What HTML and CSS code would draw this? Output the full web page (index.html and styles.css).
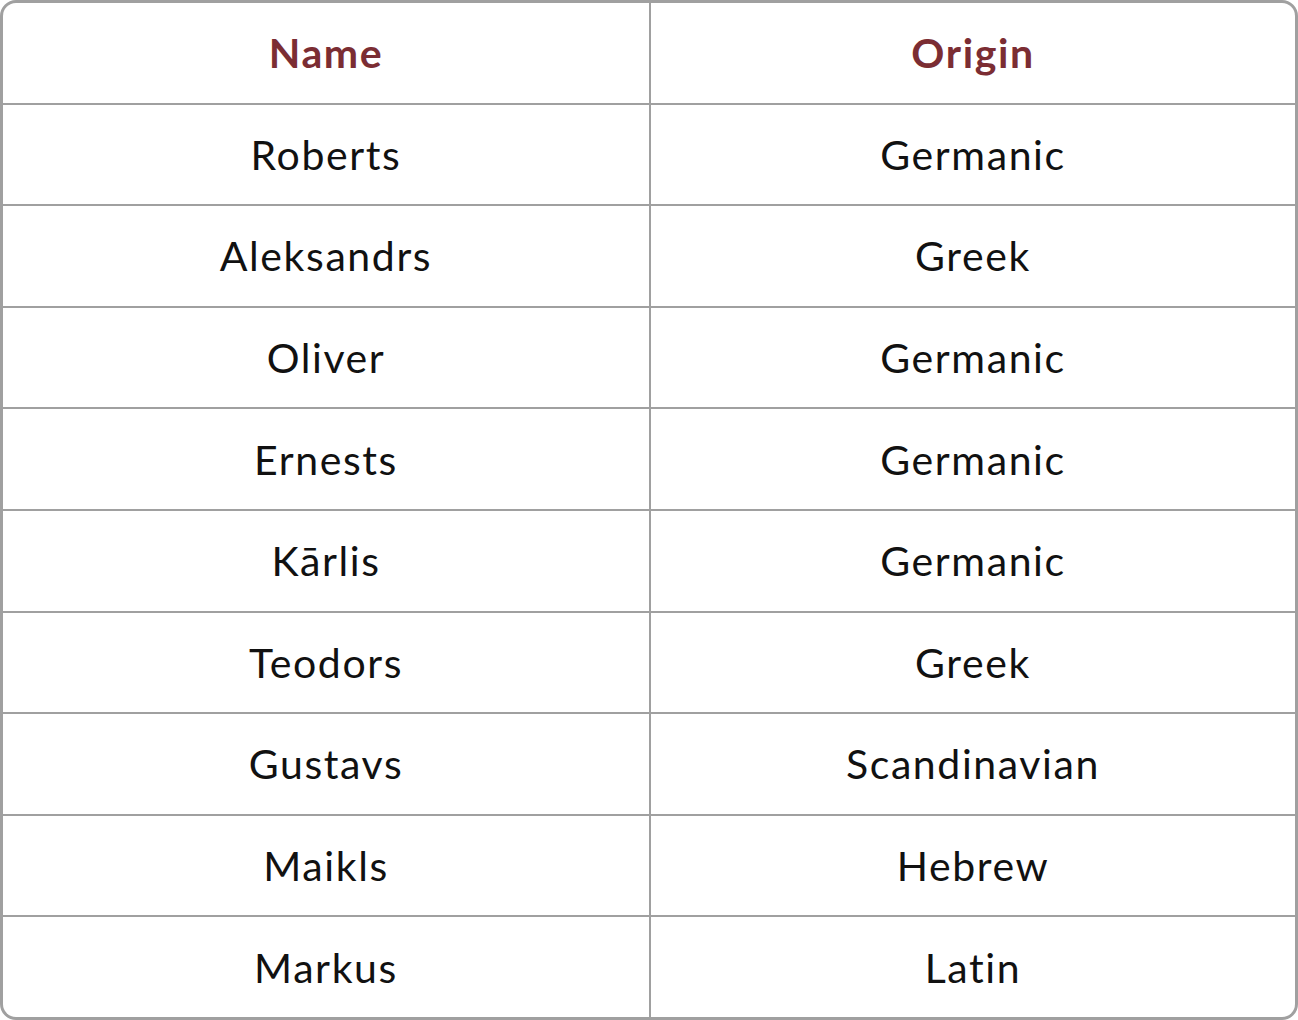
FILE: index.html
```html
<!DOCTYPE html>
<html>
<head>
<meta charset="utf-8">
<link rel="stylesheet" href="styles.css">
</head>
<body>
<div class="table">
  <div class="cell head">Name</div><div class="cell head">Origin</div>
  <div class="cell">Roberts</div><div class="cell">Germanic</div>
  <div class="cell">Aleksandrs</div><div class="cell">Greek</div>
  <div class="cell">Oliver</div><div class="cell">Germanic</div>
  <div class="cell">Ernests</div><div class="cell">Germanic</div>
  <div class="cell">Kārlis</div><div class="cell">Germanic</div>
  <div class="cell">Teodors</div><div class="cell">Greek</div>
  <div class="cell">Gustavs</div><div class="cell">Scandinavian</div>
  <div class="cell">Maikls</div><div class="cell">Hebrew</div>
  <div class="cell">Markus</div><div class="cell">Latin</div>
</div>
</body>
</html>
```
FILE: styles.css
```css
html, body {
  margin: 0;
  padding: 0;
  background: #ffffff;
}
.table {
  box-sizing: border-box;
  width: 1298px;
  height: 1020px;
  border: 3px solid #a0a0a0;
  border-radius: 16px;
  overflow: hidden;
  background: #a0a0a0;
  display: grid;
  grid-template-columns: 646px 1fr;
  grid-template-rows: repeat(10, 1fr);
  gap: 2px;
}
.cell {
  background: #ffffff;
  display: flex;
  align-items: center;
  justify-content: center;
  font-family: "Lato", "Liberation Sans", sans-serif;
  font-size: 41px;
  letter-spacing: 1.6px;
  color: #111111;
}
.head {
  color: #7b2d33;
  font-weight: 700;
}
```
